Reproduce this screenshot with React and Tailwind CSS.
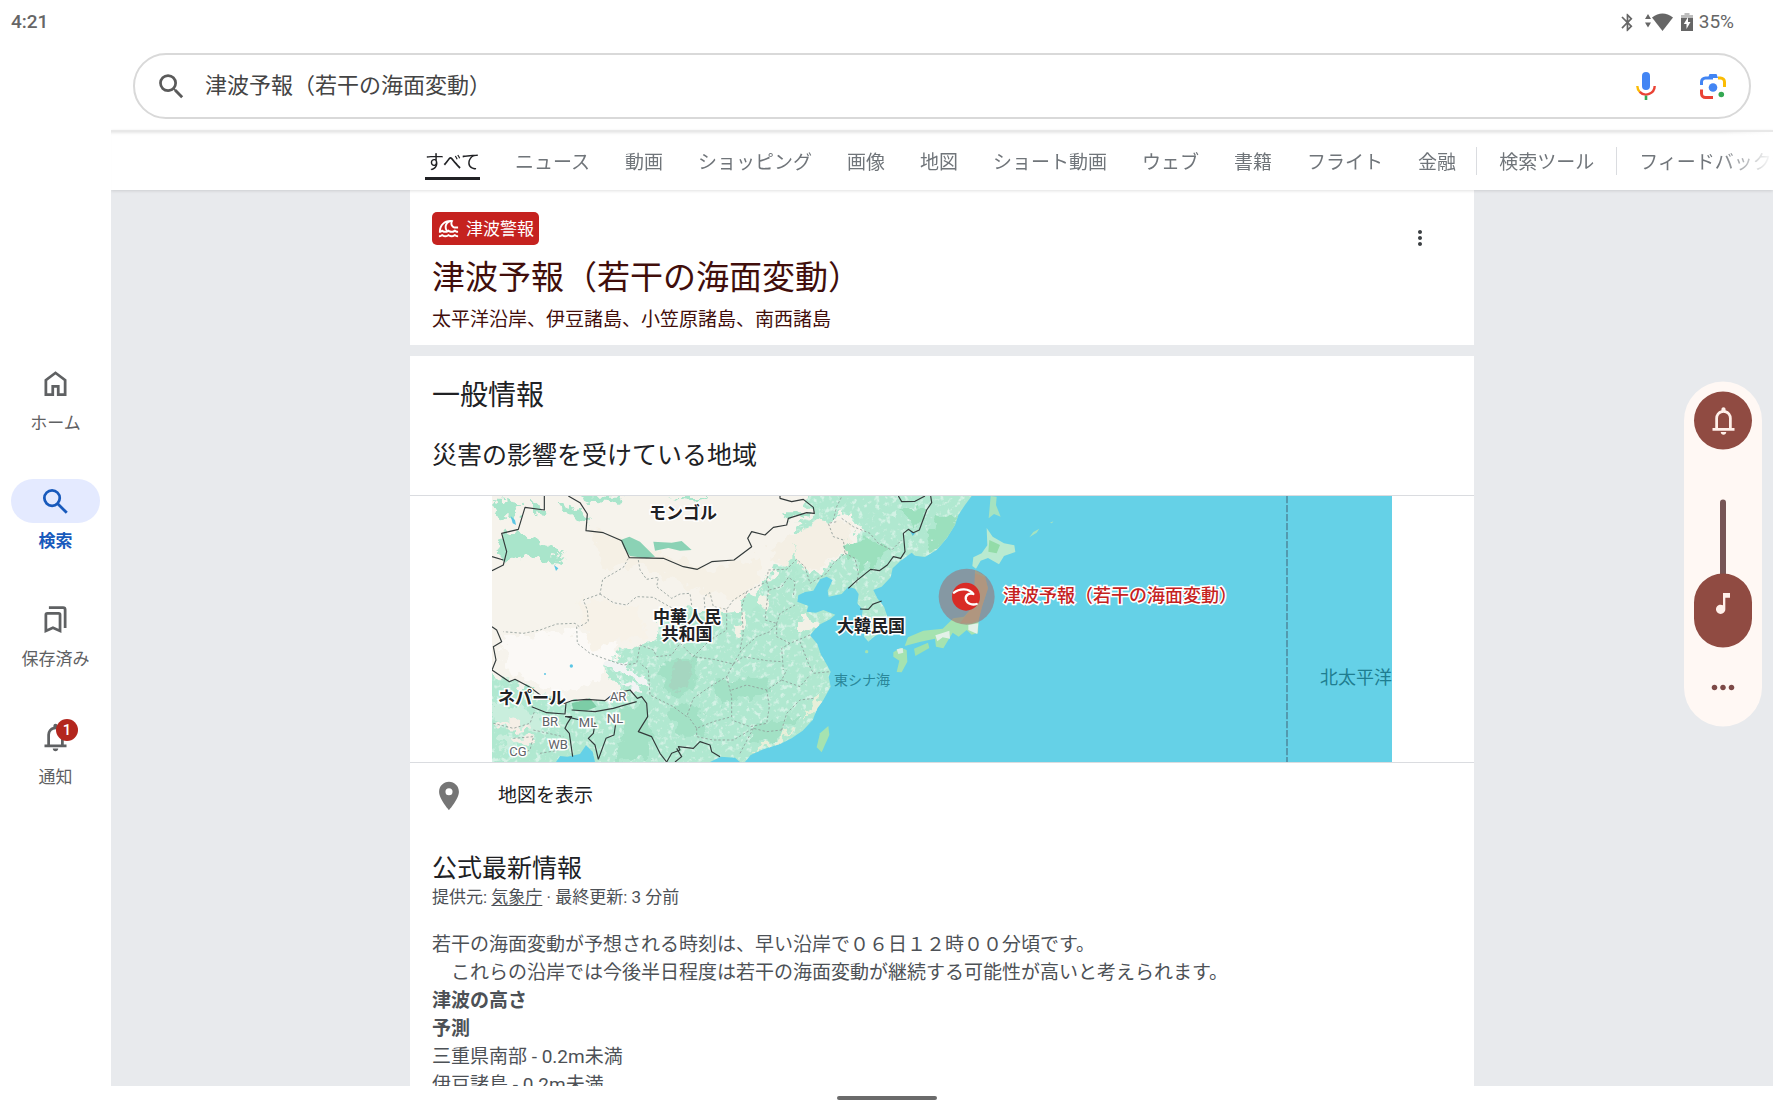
import React, { useState } from 'react';
import clsx from 'clsx';
import {
  MdBluetooth,
  MdLocationOn,
  MdMoreHoriz,
  MdMoreVert,
  MdMusicNote,
  MdOutlineTsunami,
  MdSearch,
} from 'react-icons/md';

const tabs = [
  'すべて',
  'ニュース',
  '動画',
  'ショッピング',
  '画像',
  '地図',
  'ショート動画',
  'ウェブ',
  '書籍',
  'フライト',
  '金融',
];

const HomeIcon = () => (
  <svg viewBox="0 0 24 24" className="size-[33px]" fill="currentColor">
    <path d="M6 19h3v-6h6v6h3v-9l-6-4.5L6 10v9zm-2 2V9l8-6 8 6v12h-7v-6h-2v6H4z" />
  </svg>
);

const NavSearchIcon = () => (
  <svg viewBox="0 0 24 24" className="size-[33px]" fill="none" stroke="currentColor" strokeWidth="2">
    <circle cx="9.5" cy="9.5" r="5.6" />
    <path d="M13.6 13.6l6.6 6.6" />
  </svg>
);

const SavedIcon = () => (
  <svg viewBox="0 0 24 24" className="size-[33px]" fill="none" stroke="currentColor" strokeWidth="2">
    <path d="M5 20.3V8.5a1 1 0 0 1 1-1h8.3a1 1 0 0 1 1 1v11.8l-5.15-2.3z" />
    <path d="M7.2 3.3h10.3a1.5 1.5 0 0 1 1.5 1.5V18.2" />
  </svg>
);

const BellIcon = () => (
  <svg viewBox="0 0 24 24" className="size-[33px]" fill="currentColor">
    <path d="M4 19v-2h2v-7q0-2.075 1.25-3.688T10.5 4.2v-.7q0-.625.438-1.062T12 2t1.063.438T13.5 3.5v.7q2 .5 3.25 2.113T18 10v7h2v2zm8 3q-.825 0-1.412-.587T10 20h4q0 .825-.587 1.413T12 22m-4-5h8v-7q0-1.65-1.175-2.825T12 6t-2.825 1.175T8 10z" />
  </svg>
);

const MicIcon = () => (
  <svg viewBox="0 0 20 28" className="h-7 w-5" fill="none">
    <rect x="6" y="0" width="8" height="18" rx="4" fill="#4285f4" />
    <path d="M1.3 14a8.7 8.7 0 0 0 2.6 6" stroke="#fbbc04" strokeWidth="2.4" />
    <path d="M3.7 19.8A8.7 8.7 0 0 0 18.7 14" stroke="#ea4335" strokeWidth="2.4" />
    <path d="M10 23.6V28" stroke="#34a853" strokeWidth="2.6" />
  </svg>
);

const LensIcon = () => (
  <svg viewBox="0 0 26 26" className="size-[26px]" fill="none" strokeWidth="3">
    <path d="M1.5 12V9a4 4 0 0 1 4-4H13" stroke="#4285f4" />
    <path d="M8 5l1.5-4h7L18 5z" fill="#4285f4" />
    <path d="M18 5h2.5a4 4 0 0 1 4 4v5" stroke="#fbbc04" />
    <path d="M1.5 16.5v4a4 4 0 0 0 4 4H13" stroke="#ea4335" />
    <circle cx="13" cy="14.5" r="4.3" fill="#4285f4" />
    <circle cx="21.3" cy="21.5" r="2.8" fill="#34a853" />
  </svg>
);

const navItems = [
  { label: 'ホーム', icon: HomeIcon },
  { label: '検索', icon: NavSearchIcon },
  { label: '保存済み', icon: SavedIcon },
  { label: '通知', icon: BellIcon, badge: 1 },
];

const StatusBar = () => (
  <header className="flex h-11 shrink-0 items-center justify-between pr-[39px] pl-[11px] text-[19px] leading-6 text-[#666]">
    <span className="font-medium">4:21</span>
    <div className="flex items-center">
      <MdBluetooth className="size-[21px]" />
      <svg viewBox="0 0 28 18" className="ml-[7px] h-[18px] w-7" fill="currentColor">
        <path d="M0 6l3-5 3 5zM0 9.500h6l-3 5z" />
        <path d="M7 4.500Q17.500-3.500 28 4.500L17.500 18z" />
      </svg>
      <svg viewBox="0 0 12 18" className="ml-2 h-[18px] w-3">
        <path d="M3.500 0h5v2H12v4H0V2h3.500z" fill="#bdbdbd" />
        <path d="M0 5h12v13H0z" fill="#666" />
        <path d="M7 4L2.800 11h2.700v5l4-7H7z" fill="#fff" />
      </svg>
      <span className="ml-1.5">35%</span>
    </div>
  </header>
);

const SideNav = () => (
  <nav className="z-20 flex w-[111px] shrink-0 flex-col items-center justify-center gap-11 bg-white px-[11px] pt-5">
    {navItems.map(({ label, icon: Icon, badge }) => {
      const active = label === '検索';
      return (
        <button key={label} className={clsx('w-full', active ? 'text-[#185abc]' : 'text-[#5f6163]')}>
          <span
            className={clsx(
              'relative flex h-11 items-center justify-center rounded-full',
              active && 'bg-[#e4eaff]'
            )}
          >
            <Icon />
            {badge && (
              <span className="absolute top-1 right-[22px] flex size-[22px] items-center justify-center rounded-full bg-[#b3261e] text-[15px] leading-5 font-medium text-white">
                {badge}
              </span>
            )}
          </span>
          <span className={clsx('mt-1.5 block text-[17px] leading-6 whitespace-nowrap', active && 'font-bold')}>
            {label}
          </span>
        </button>
      );
    })}
  </nav>
);

const SearchBox = () => (
  <form
    role="search"
    className="mx-[22px] mt-[9px] mb-[11px] flex h-[66px] shrink-0 items-center rounded-full border-2 border-[#d9d9d9] px-5"
  >
    <label htmlFor="q" className="text-[#5a5a5a]">
      <MdSearch className="size-[33px]" />
    </label>
    <input
      id="q"
      type="text"
      defaultValue="津波予報（若干の海面変動）"
      className="ml-[17px] min-w-0 flex-1 bg-transparent text-[22px] leading-8 text-[#444] outline-none"
    />
    <button type="button" aria-label="音声検索" className="mr-11">
      <MicIcon />
    </button>
    <button type="button" aria-label="カメラで検索" className="mr-[3px]">
      <LensIcon />
    </button>
  </form>
);

const TabBar = () => (
  <div className="relative z-10 flex h-[60px] shrink-0 items-center overflow-hidden border-t-2 border-[#e8e8e8] bg-white pl-[calc(50%-517px)] text-[19px] leading-7 whitespace-nowrap text-[#70757a] shadow-[0_1px_3px_rgba(0,0,0,0.12),inset_0_3px_3px_-2px_rgba(0,0,0,0.1)]">
    <div className="flex shrink-0 gap-[35px]">
      {tabs.map((tab, i) => (
        <a
          key={tab}
          href="#"
          className={clsx('border-b-3 border-transparent pt-1.5', i === 0 && 'border-b-[#202124] text-[#202124]')}
        >
          {tab}
        </a>
      ))}
    </div>
    <span className="ml-5 h-7 w-px shrink-0 bg-[#dadce0]" />
    <a href="#" className="ml-[22px] shrink-0 pt-[3px]">検索ツール</a>
    <span className="ml-[22px] h-7 w-px shrink-0 bg-[#dadce0]" />
    <a href="#" className="ml-[22px] shrink-0 pt-[3px]">フィードバック</a>
    <div className="pointer-events-none absolute inset-y-0 right-0 w-14 bg-linear-to-r from-transparent to-white" />
  </div>
);

const countryLabels = [
  { text: ['モンゴル'], pos: 'left-[191px] top-[17px]' },
  { text: ['中華人民', '共和国'], pos: 'left-[195px] top-[130px]' },
  { text: ['ネパール'], pos: 'left-[40px] top-[202px]' },
  { text: ['大韓民国'], pos: 'left-[379px] top-[130px]' },
];

const regionLabels = [
  { text: 'AR', pos: 'left-[126px] top-[201px]' },
  { text: 'BR', pos: 'left-[58px] top-[226px]' },
  { text: 'ML', pos: 'left-[96px] top-[227px]' },
  { text: 'NL', pos: 'left-[123px] top-[223px]' },
  { text: 'WB', pos: 'left-[66px] top-[249px]' },
  { text: 'CG', pos: 'left-[26px] top-[256px]' },
];

const mainland =
  'M36 18H1475L1455 45 1435 75 1425 105 1400 145 1370 180 1335 201 1305 197 1295 188 1262 212 1238 235 1232 262 1205 290 1180 300 1192 325 1212 350 1224 385 1207 425 1182 440 1165 455 1152 440 1156 405 1145 385 1148 360 1132 340 1136 312 1125 296 1105 290 1085 312 1046 320 1043 302 1058 270 1040 260 1020 268 1000 302 975 306 955 316 952 335 985 348 980 365 1008 368 1030 360 1066 374 1050 388 1022 402 1005 418 990 436 1012 462 1022 492 1038 520 1052 545 1046 560 1052 590 1030 630 1012 655 998 690 968 722 935 745 900 762 850 778 812 795 795 816H780L765 803 722 800 690 816H345L338 785 318 766 300 792 262 800 240 798 228 816H36z';

const MapArt = () => (
  <svg
    viewBox="36 18 2703 798"
    preserveAspectRatio="xMinYMid slice"
    className="absolute inset-0 size-full"
    aria-hidden="true"
  >
    <defs>
      <clipPath id="land">
        <path d={mainland} />
      </clipPath>
      <filter id="rough" x="0" y="0" width="100%" height="100%">
        <feTurbulence type="fractalNoise" baseFrequency="0.03" numOctaves="3" seed="4" />
        <feDisplacementMap in="SourceGraphic" scale="60" xChannelSelector="R" yChannelSelector="G" />
      </filter>
      {/* pale speckles that break up the flat green */}
      <filter id="speckle" x="0" y="0" width="100%" height="100%">
        <feTurbulence type="fractalNoise" baseFrequency="0.06" numOctaves="3" seed="9" />
        <feColorMatrix values="0 0 0 0 0.84  0 0 0 0 0.95  0 0 0 0 0.9  5 0 0 0 -2.7" />
      </filter>
    </defs>
    <rect x="36" y="18" width="2703" height="798" fill="#65d1e7" />
    <path d={mainland} fill="#b0e8d0" />
    <g clipPath="url(#land)">
      <rect x="36" y="18" width="1500" height="798" filter="url(#speckle)" opacity=".6" />
      <g filter="url(#rough)">
        <path
          d="M-20-20H950L1010 70 950 110 970 130 1060 80 1110 70 1135 130 1110 180 1050 230 990 250 960 195 900 220 865 270 820 320 780 365 720 370 640 360 540 380 530 440 480 470 420 490 370 500 380 560 440 610 400 630 250 640 170 610 90 570-20 540z"
          fill="#f6f3ec"
        />
        <path d="M860 180L1010 90 1110 100 1100 190 1000 240 900 210z" fill="#f4efe4" />
        <path d="M330 110L560 200 700 240 830 200 850 260 780 330 640 300 480 220 370 240z" fill="#f5f0e5" />
        <path d="M60 440L300 420 420 470 360 560 250 610 90 550z" fill="#fbf9f6" />
        <path d="M300 330L480 340 500 440 330 470z" fill="#f7f2e8" />
        <path
          d="M36 30L130 40 110 80 60 75zM150 40L200 60 190 75 150 70zM50 140L110 130 230 180 260 200 150 190 60 215zM110 165L250 205 235 215 120 195zM230 40L300 60 340 90 260 80z"
          fill="#a9e5cb"
        />
        <path d="M300 20L440 20 400 40 330 35zM560 18L690 18 640 30zM900 70L990 70 960 95 915 90z" fill="#a9e5cb" />
        <path d="M940 170L965 240 940 250zM780 330L850 300 860 350 800 370z" fill="#b3ead2" />
        <path
          d="M540 520L660 500 640 600 560 620zM420 660L500 640 520 800 400 816 430 740zM700 580L860 560 880 610 720 640zM560 660L660 650 680 740 600 740zM830 700L960 680 900 740 820 760z"
          fill="#a2e1c5"
        />
        <path d="M590 510L640 520 620 590 580 600z" fill="#a5d6c0" />
        <path d="M1090 140L1180 150 1230 180 1150 240 1100 200zM1370 90L1440 80 1400 170 1340 190zM1260 50L1340 60 1300 110z" fill="#9be0bd" />
        <path d="M390 500L430 520 500 560 490 580 430 550 380 530zM420 570L480 590 490 610 440 600z" fill="#f2f4f4" />
        <path d="M780 380L800 370 790 440 765 445zM960 370L1000 380 1010 430 960 420zM840 310L870 320 860 350 830 340z" fill="#f2f1e6" />
        <path d="M36 640L110 650 200 690 150 720 36 690zM60 740L130 735 140 760 70 780z" fill="#c9eedd" />
        <path d="M36 700L90 690 150 715 100 725zM90 745L160 735 170 750 110 765z" fill="#f5eee6" />
        <path d="M1000 620L1035 610 1010 660 980 690zM950 720L900 760 820 790 840 770z" fill="#e7efd9" />
      </g>
      <path d="M422 150L448 140 480 155 525 200 500 205 450 198 432 175z" fill="#8bd2b5" />
      <path d="M520 155L575 158 605 153 635 180 600 182 565 174 525 182z" fill="#8bd2b5" />
      <path d="M275 640L330 625 350 650 320 662 280 660z" fill="#7ccda6" />
      <path d="M92 78L105 90 108 105 98 100zM222 225L235 235 228 243zM1290 122L1305 130 1298 138z" fill="#5cc6e4" />
      <circle cx="274" cy="528" r="5" fill="#5cc6e4" />
      <circle cx="195" cy="552" r="3" fill="#5cc6e4" />
    </g>

    {/* province lines */}
    <g fill="none" stroke="#8f9b97" strokeWidth="2.500" strokeDasharray="7 6">
      <path d="M445 205L430 232 400 250 368 268 360 312 310 330 322 360 325 395 298 410 285 400 230 402 180 420 130 430 70 425" />
      <path d="M475 210L480 240 500 268 535 262 530 290 575 325 600 312 630 310 635 345" />
      <path d="M360 312L400 338 440 345 470 320 520 322 560 345 590 362" />
      <path d="M290 410L292 460 330 490 370 505 430 525 470 520 480 465 520 480 530 500 575 495 600 460 640 500" />
      <path d="M675 355L672 320 690 308 700 350 740 358 760 330 800 305 860 275 865 240 920 238 950 208 975 230 990 280 1040 250 1060 220 1095 190 1090 150 1060 140 1045 100 1070 95" />
      <path d="M1060 90L1070 50 1085 20M1085 85L1120 110 1170 130 1195 160 1235 180 1265 150" />
      <path d="M1095 190L1125 205 1135 250 1130 280M860 275L868 300 905 290 925 262 945 275 940 320M865 300L855 390 890 400" />
      <path d="M800 305L785 350 790 430 780 480M740 360L740 420 690 450 640 500 700 508 760 522 785 480 830 440 870 425 890 400 900 370 945 345" />
      <path d="M890 400L890 440 930 460 990 435M930 460L905 475 910 540M960 455L985 520 1000 550 1050 545" />
      <path d="M760 522L790 500 860 512 905 515M760 522L740 560 690 590 640 625 620 680 580 650 510 615 505 540 480 520" />
      <path d="M740 560L755 620 755 680 700 695 650 715 625 680M755 600L800 585 860 600 905 570 920 540M860 600L868 650 860 700 810 710 755 690" />
      <path d="M905 570L960 590 990 555M905 720L920 670 960 630 1000 625M650 715L650 740 700 750 760 750 820 715 860 725 905 720M820 715L780 790" />
      <path d="M40 700L100 715 150 700 165 660M100 745L160 740 150 780 100 800M160 720L250 740M180 790L240 780" />
    </g>

    {/* national borders */}
    <g fill="none" stroke="#333a3a" strokeWidth="3.500" strokeLinejoin="round">
      <path d="M193 18V60L135 52 115 118 65 130 80 185 70 225 36 242M36 200L70 210" />
      <path d="M265 18L300 38 322 72 318 122 370 128 425 152 448 203 550 205 610 230 652 238 695 215 762 210 815 170 803 145 815 125 855 135 880 112 920 105 925 85 980 68 1003 70 1000 52 970 28 935 35 900 25V18" />
      <path d="M1255 18L1265 35 1305 34 1335 18M1352 18L1355 38 1340 60 1318 120 1300 128 1285 118 1270 130 1275 185 1262 205 1240 200 1222 225 1198 242 1172 238 1130 272 1105 295" />
      <path d="M1140 357L1165 358 1178 343 1205 333" />
      <path d="M36 410L50 420 65 455 40 470 48 510 36 540 88 575 105 568 150 592 190 622 255 640 275 632 320 628 375 632 400 612 450 600 472 625 485 620 500 640 503 680 475 725 515 740 540 790 560 816" />
      <path d="M155 650L200 668 255 672 258 640M275 660L345 665 400 655 470 635M255 680L275 680 262 700 255 715 268 730 278 800M258 680L300 690 345 700 340 730 325 745 345 765 355 808M355 808L378 745 402 735 408 695" />
      <path d="M560 816L575 790 600 780 595 770 640 775 660 755 690 765 695 785 720 800M590 775L605 800 585 816" />
    </g>

    {/* islands */}
    <path d="M1045 708L1048 735 1025 787 1010 772 1020 730z" fill="#a5e3b0" />
    <path d="M1240 487L1262 473 1280 480 1282 515 1265 547 1250 546 1258 512 1240 500z" fill="#a5e3b0" />
    <path d="M1250 478L1268 474 1270 488 1255 492z" fill="#dcefe6" />
    <circle cx="1160" cy="485" r="5" fill="#a5e3b0" />
    <g transform="translate(1260 0)">
      <path d="M272 18L290 20 288 45 302 80 282 72 266 85z" fill="#a5e3c0" />
      <path d="M388 142L400 126 418 116 410 128zM450 98l10-4-4 6z" fill="#a5e3c0" />
      <path d="M260 114L278 140 312 160 343 166 346 186 312 198 297 223 264 204 242 212 228 236 217 228 220 202 245 190 262 166z" fill="#b9ead0" />
      <path d="M268 150L300 165 290 190 265 185z" fill="#93dca8" />
      <path d="M225 240L255 258 264 295 246 350 236 390 234 428 215 434 200 420 176 440 158 428 130 475 108 470 105 446 62 455 14 468 24 442 70 422 128 416 160 385 192 380 218 350 224 300z" fill="#a5e3b0" />
      <path d="M106 436L125 430 148 422 150 446 128 442 112 454zM205 405L235 400 232 432 205 420z" fill="#e3f1e8" />
      <path d="M42 476L84 458 88 474 46 498z" fill="#a0e2ab" />
    </g>
    <path d="M2421 18V816" stroke="#4b7f93" strokeWidth="4" strokeDasharray="22 5" />

    {/* alert marker */}
    <circle cx="1460" cy="320" r="84" fill="#a06a6c" fillOpacity=".55" />
    <path d="M1485 250L1515 262 1524 295 1506 350 1496 390 1475 400 1440 400 1478 350z" fill="#b98f78" fillOpacity=".6" />
    <circle cx="1458" cy="320" r="42" fill="#d92b26" />
    <path
      d="M1422 308C1438 294 1468 294 1480 312C1466 308 1454 316 1458 330C1462 342 1478 346 1490 342"
      fill="none"
      stroke="#fff"
      strokeWidth="7"
      strokeLinecap="round"
      strokeLinejoin="round"
    />
  </svg>
);

const DisasterMap = () => (
  <div className="border-y border-[#dadce0] px-[82px]">
    <div className="relative h-[266px] overflow-hidden bg-[#65d1e7]">
      <MapArt />
      {countryLabels.map(({ text, pos }) => (
        <div
          key={text[0]}
          className={clsx(
            'absolute -translate-1/2 text-center text-[17px] leading-[17px] font-bold whitespace-nowrap text-[#202124] [paint-order:stroke_fill] [-webkit-text-stroke:3px_#fff]',
            pos
          )}
        >
          {text.map((line) => (
            <div key={line}>{line}</div>
          ))}
        </div>
      ))}
      {regionLabels.map(({ text, pos }) => (
        <span
          key={text}
          className={clsx(
            'absolute -translate-1/2 text-[13px] leading-4 text-[#5f6368] [paint-order:stroke_fill] [-webkit-text-stroke:3px_#fff]',
            pos
          )}
        >
          {text}
        </span>
      ))}
      <span className="absolute top-[184px] left-[370px] -translate-1/2 text-sm whitespace-nowrap text-[#2a8799]">
        東シナ海
      </span>
      <span className="absolute top-[182px] left-[828px] -translate-y-1/2 text-lg leading-6 whitespace-nowrap text-[#1f7d90]">
        北太平洋
      </span>
      <span className="absolute top-[100px] left-[511px] -translate-y-1/2 text-lg leading-6 font-medium whitespace-nowrap text-[#c5221f] [paint-order:stroke_fill] [-webkit-text-stroke:3px_#fff]">
        津波予報（若干の海面変動）
      </span>
    </div>
  </div>
);

const AlertCard = () => (
  <section className="relative bg-white px-[22px] pt-[22px] pb-[11px] text-[#410e0b]">
    <div className="flex h-[33px] w-fit items-center gap-1.5 rounded-[5px] bg-[#c5221f] px-[5px] text-white">
      <MdOutlineTsunami className="size-[23px]" />
      <span className="text-[17px] leading-6">津波警報</span>
    </div>
    <h1 className="mt-[9px] text-[33px] leading-12">津波予報（若干の海面変動）</h1>
    <p className="mt-1 text-[19px] leading-7">太平洋沿岸、伊豆諸島、小笠原諸島、南西諸島</p>
    <button aria-label="その他" className="absolute top-9 right-[42px] text-[#3c4043]">
      <MdMoreVert className="size-6" />
    </button>
  </section>
);

const InfoCard = () => (
  <section className="mt-[11px] bg-white text-[#202124]">
    <div className="px-[22px] pt-5 pb-[19px]">
      <h2 className="text-[28px] leading-10">一般情報</h2>
      <h3 className="mt-5 text-[25px] leading-10">災害の影響を受けている地域</h3>
    </div>
    <DisasterMap />
    <a href="#" className="flex h-[66px] items-center px-[22px] text-[19px] leading-7">
      <MdLocationOn className="size-[34px] text-[#757575]" />
      <span className="ml-8">地図を表示</span>
    </a>
    <div className="px-[22px] pt-5 pb-10">
      <h3 className="text-[25px] leading-10">公式最新情報</h3>
      <p className="text-[17px] leading-4 text-[#4d5156]">
        提供元:{' '}
        <a href="#" className="underline underline-offset-2">気象庁</a>
        {' · 最終更新: 3 分前'}
      </p>
      <div className="mt-[26px] text-[19px] leading-7 text-[#4d5156]">
        <p>若干の海面変動が予想される時刻は、早い沿岸で０６日１２時００分頃です。</p>
        <p>　これらの沿岸では今後半日程度は若干の海面変動が継続する可能性が高いと考えられます。</p>
        <p className="font-bold">津波の高さ</p>
        <p className="font-bold">予測</p>
        <p>三重県南部 - 0.2m未満</p>
        <p>伊豆諸島 - 0.2m未満</p>
      </div>
    </div>
  </section>
);

const VolumePanel = () => {
  const [volume, setVolume] = useState(0);

  return (
    <aside className="absolute top-1/2 right-[11px] z-20 flex w-[78px] -translate-y-1/2 flex-col items-center rounded-full bg-[#fff8f4] py-2.5 text-[#fff0ea]">
      <button aria-label="着信モード" className="flex size-[58px] items-center justify-center rounded-full bg-[#904b42]">
        <BellIcon />
      </button>
      <label className="relative mt-[50px] flex flex-col items-center">
        <span className="h-[78px] w-1.5 rounded-full bg-[#775656]" />
        <span className="-mt-1 flex h-[74px] w-[58px] justify-center rounded-full bg-[#904b42] pt-4">
          <MdMusicNote className="size-7" />
        </span>
        <input
          type="range"
          aria-label="メディアの音量"
          value={volume}
          onChange={(e) => setVolume(e.target.value)}
          className="absolute inset-0 size-full opacity-0 [direction:rtl] [writing-mode:vertical-lr]"
        />
      </label>
      <button aria-label="詳細設定" className="mt-[23px] mb-3 text-[#7d4a47]">
        <MdMoreHoriz className="size-[34px]" />
      </button>
    </aside>
  );
};

const App = () => (
  <div
    lang="ja"
    className="relative flex h-screen flex-col overflow-hidden bg-white font-[Roboto,'Noto_Sans_CJK_JP',sans-serif]"
  >
    <StatusBar />
    <div className="flex min-h-0 flex-1">
      <SideNav />
      <div className="flex min-w-0 flex-1 flex-col">
        <SearchBox />
        <TabBar />
        <main className="min-h-0 flex-1 overflow-y-auto bg-[#e8eaed] [scrollbar-width:none]">
          <div className="mx-auto max-w-[1064px]">
            <AlertCard />
            <InfoCard />
          </div>
        </main>
      </div>
    </div>
    <footer className="flex h-[22px] shrink-0 items-center justify-center pt-0.5">
      <span className="h-1 w-[100px] rounded-full bg-[#6b6b6b]" />
    </footer>
    <VolumePanel />
  </div>
);

export default App;
